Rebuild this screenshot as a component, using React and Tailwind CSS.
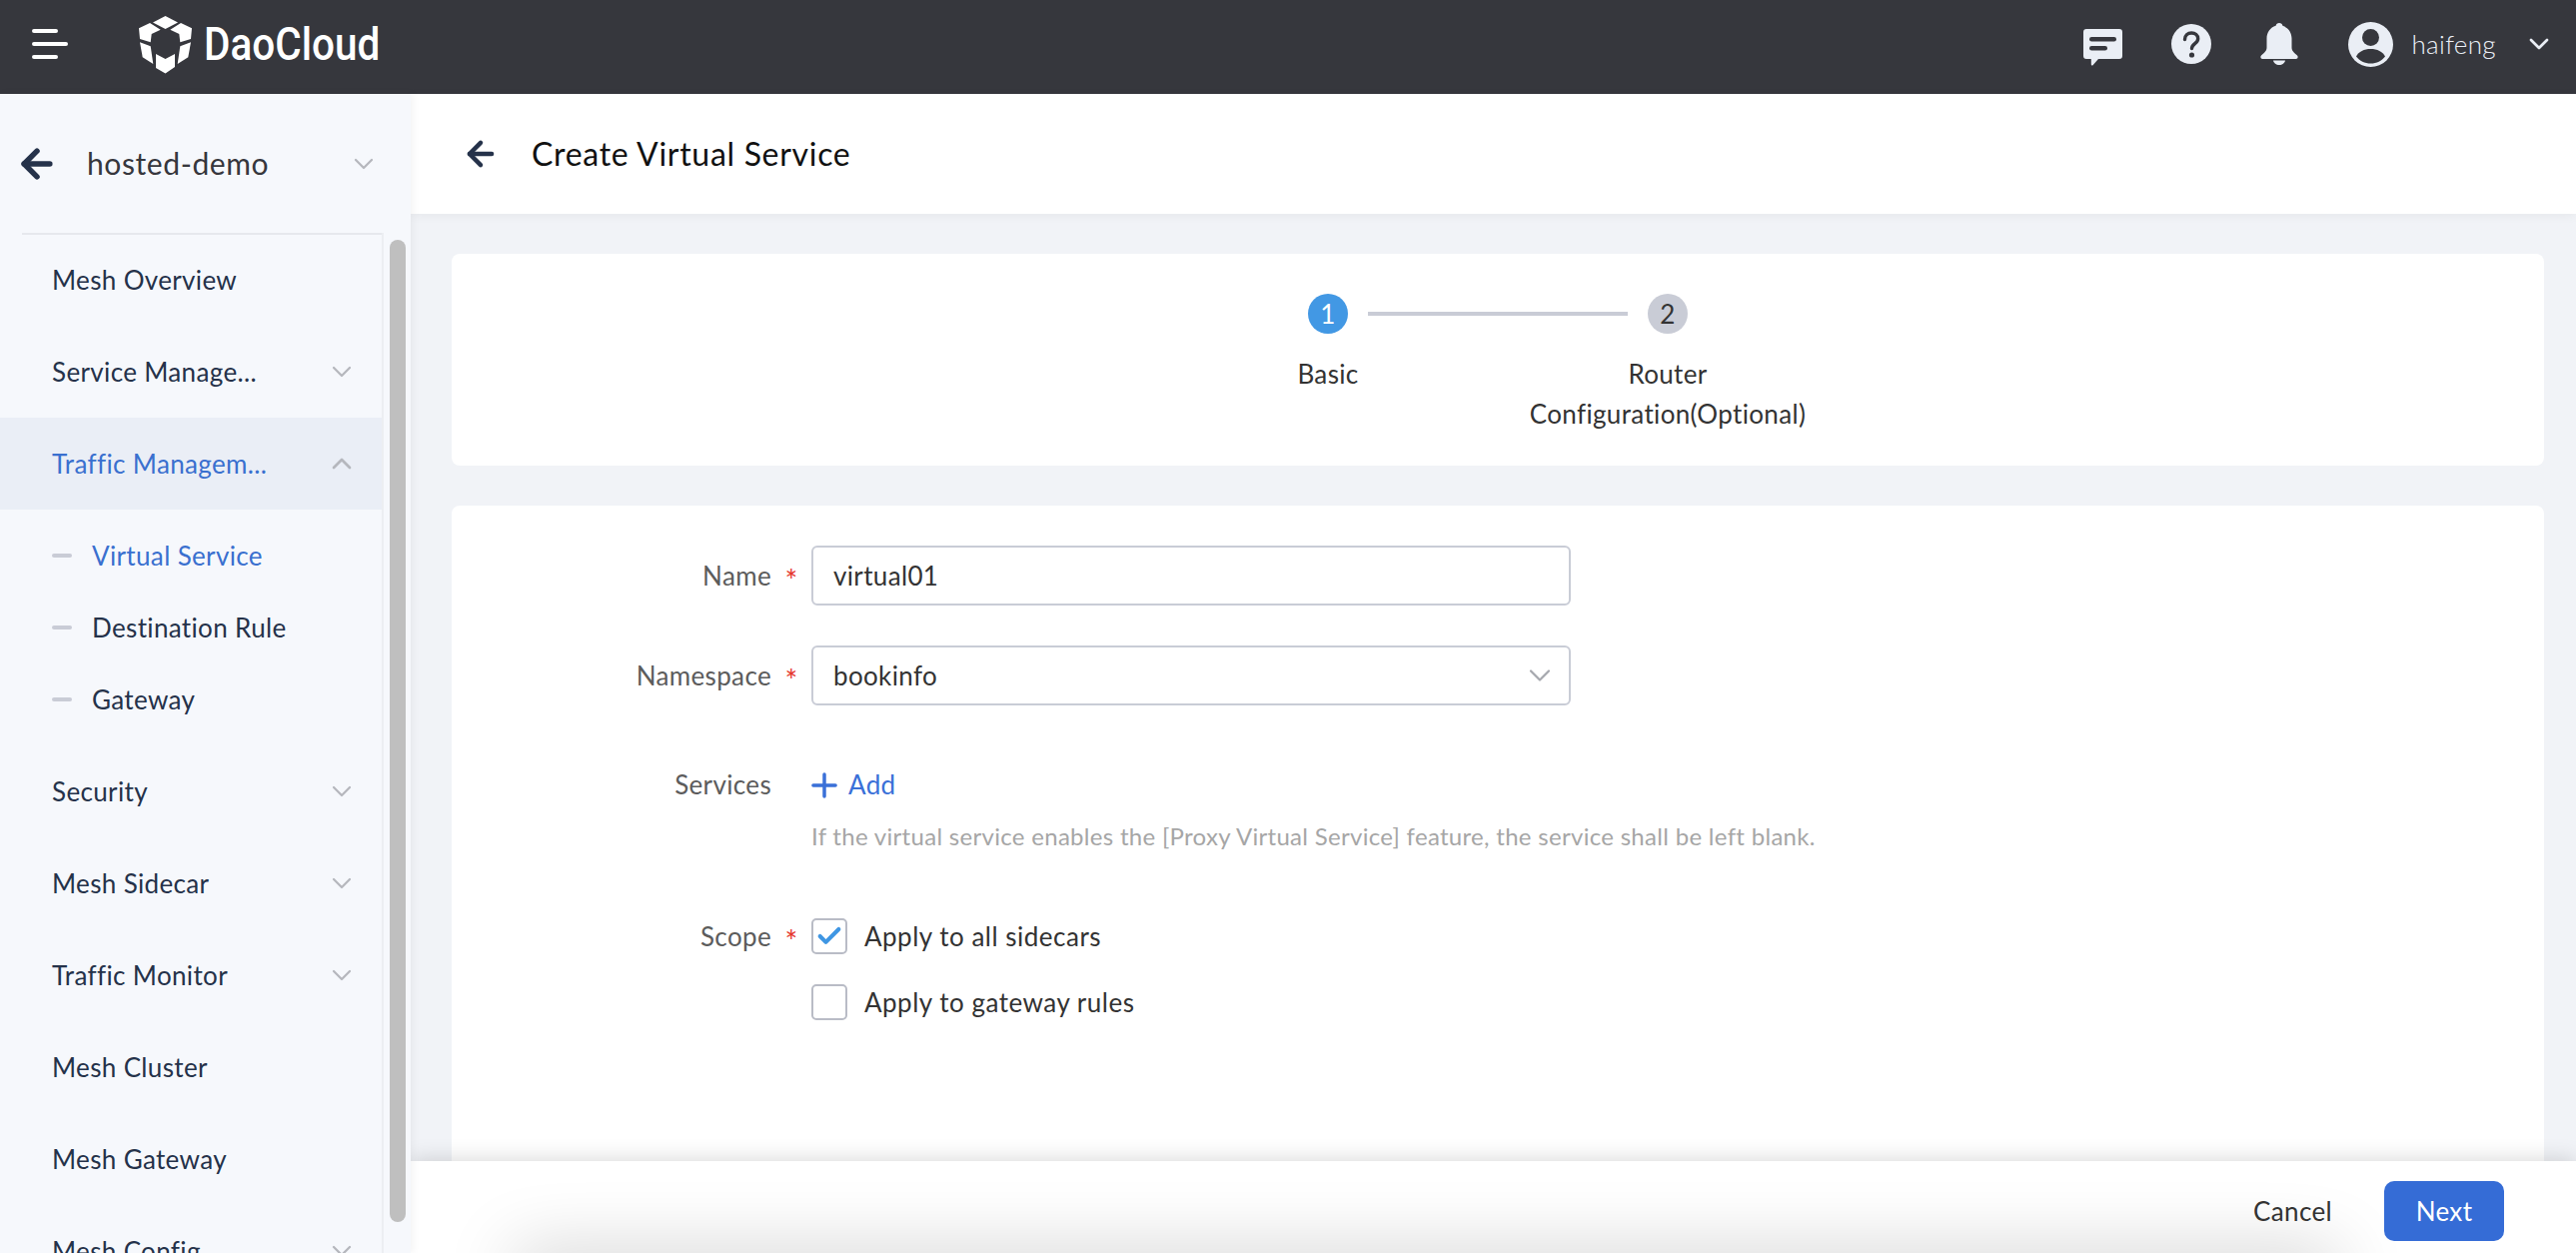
import React from 'react';
import { ChevronDown, ChevronUp, ArrowLeft, Plus, Check } from 'lucide-react';

const FONT = "font-['Lato','Open_Sans',sans-serif]";

function Logo() {
  return (
    <svg width="54" height="59" viewBox="0 0 54 59" fill="#fff">
      <path d="M26.500 1 L39 7.500 L26.500 14 L14 7.500 Z" />
      <path d="M0 13.300 L11 8 L21.700 14.700 L12.700 19 L11.700 27.300 L1 24 Z" />
      <path d="M53 13.300 L42 8 L31.300 14.700 L40.300 19 L41.300 27.300 L52 24 Z" />
      <path d="M1 27.300 L11.700 31.300 L14.300 49 L3.700 42.300 Z" />
      <path d="M52 27.300 L41.300 31.300 L38.700 49 L49.300 42.300 Z" />
      <path d="M17 39 L26.500 44 L36 39 L36 52 L26.500 58.500 L17 53 Z" />
    </svg>
  );
}

function ChatIcon() {
  return (
    <svg width="39" height="37" viewBox="0 0 39 37">
      <path d="M3 0h33a3 3 0 0 1 3 3v24a3 3 0 0 1-3 3H15l-5.500 6.300a1 1 0 0 1-1.700-.7V30H3a3 3 0 0 1-3-3V3a3 3 0 0 1 3-3z" fill="#eaeef5" />
      <rect x="6" y="8" width="27" height="4.500" rx="2.250" fill="#36373d" />
      <rect x="6" y="17" width="18" height="4.500" rx="2.250" fill="#36373d" />
    </svg>
  );
}

function HelpIcon() {
  return (
    <svg width="40" height="40" viewBox="0 0 40 40">
      <circle cx="20" cy="20" r="20" fill="#eaeef5" />
      <path d="M13.500 15.500c0-4 3-6.500 6.700-6.500s6.500 2.400 6.500 5.700c0 4.800-6.200 5-6.200 9.800" fill="none" stroke="#36373d" strokeWidth="3.400" strokeLinecap="round" />
      <circle cx="20.500" cy="31" r="2.600" fill="#36373d" />
    </svg>
  );
}

function BellIcon() {
  return (
    <svg width="38" height="42" viewBox="0 0 38 42" fill="#eaeef5">
      <path d="M19 0a3.500 3.500 0 0 1 3.400 2.800C28 4.400 31.500 9.500 31.500 15.500v9c0 3 1.500 4.500 5.500 8 1.300 1.200.5 3.500-1.300 3.500H2.300C.5 36-.3 33.700 1 32.500c4-3.500 5.500-5 5.500-8v-9c0-6 3.500-11.100 9.100-12.700A3.500 3.500 0 0 1 19 0z" />
      <path d="M13 37.500h12c-.4 2.600-3 4.500-6 4.500s-5.600-1.900-6-4.500z" />
    </svg>
  );
}

function AvatarIcon() {
  return (
    <svg width="45" height="45" viewBox="0 0 45 45">
      <circle cx="22.500" cy="22.500" r="22.500" fill="#eaeef5" />
      <circle cx="22.500" cy="15.500" r="8.500" fill="#36373d" />
      <path d="M8 34.500c2.500-5 8-7.500 14.500-7.500S34.500 29.500 37 34.500C33.500 39 28.500 41.500 22.500 41.500S11.500 39 8 34.500z" fill="#36373d" />
    </svg>
  );
}

function Header() {
  return (
    <header className="h-[94px] shrink-0 bg-[#36373d] flex items-center pl-8 pr-[21px] pb-[6px]">
      <div className="w-9 flex flex-col gap-[9px]">
        <div className="h-1 w-[26px] rounded-full bg-white" />
        <div className="h-1 w-9 rounded-full bg-white" />
        <div className="h-1 w-[26px] rounded-full bg-white" />
      </div>
      <div className="ml-[71px] flex items-center">
        <Logo />
      </div>
      <span className="ml-[11px] w-[173px] text-[46px] leading-none font-medium tracking-normal text-white font-['Roboto',sans-serif] origin-left scale-x-[0.88] whitespace-nowrap">DaoCloud</span>
      <div className="ml-auto flex items-center">
        <div className="mt-[6px]"><ChatIcon /></div>
        <div className="ml-[49px]"><HelpIcon /></div>
        <div className="ml-[49px]"><BellIcon /></div>
        <div className="ml-[50px]"><AvatarIcon /></div>
        <span className="ml-[18px] text-[26px] text-[#eaeef5] font-light">haifeng</span>
        <ChevronDown className="ml-[27px] text-[#eaeef5]" size={32} strokeWidth={2} />
      </div>
    </header>
  );
}

function NavRow({ label, open, active }) {
  return (
    <div className={`h-[92px] flex items-center pl-[52px] pr-[24px] ${active ? 'bg-[#eaeef6] text-[#3a70cf]' : 'text-[#25324a]'}`}>
      <span className="flex-1 text-[26px] whitespace-nowrap">{label}</span>
      {open === undefined ? null : open ? (
        <ChevronUp className="text-[#b5b7bd]" size={32} strokeWidth={2} />
      ) : (
        <ChevronDown className="text-[#b5b7bd]" size={32} strokeWidth={1.700} />
      )}
    </div>
  );
}

function SubRow({ label, active }) {
  return (
    <div className="h-[72px] flex items-center pl-[52px]">
      <div className="w-5 h-1 rounded-full bg-[#c9ccd6]" />
      <span className={`ml-5 text-[26px] ${active ? 'text-[#3a70cf]' : 'text-[#25324a]'}`}>{label}</span>
    </div>
  );
}

function Sidebar() {
  return (
    <aside className="w-[411px] shrink-0 bg-[#f6f8fc] flex flex-col overflow-hidden shadow-[2px_0_8px_rgba(0,0,0,0.05)] z-10">
      <div className="h-[139px] shrink-0 flex items-center pl-[15px] pr-[31px]">
        <ArrowLeft className="text-[#25324a]" size={44} strokeWidth={3} />
        <span className="ml-7 flex-1 text-[30px] text-[#36373d] tracking-[0.6px]">hosted-demo</span>
        <ChevronDown className="text-[#b5b7bd]" size={32} strokeWidth={1.700} />
      </div>
      <div className="flex flex-1 min-h-0">
        <div className="w-[384px] shrink-0 border-r-2 border-[#eceef2]">
          <div className="ml-[22px] h-0.5 bg-[#e6e8ed]" />
          <div className="-mt-px">
            <NavRow label="Mesh Overview" />
            <NavRow label="Service Manage..." open={false} />
            <NavRow label="Traffic Managem..." open active />
            <div className="py-[10px]">
              <SubRow label="Virtual Service" active />
              <SubRow label="Destination Rule" />
              <SubRow label="Gateway" />
            </div>
            <NavRow label="Security" open={false} />
            <NavRow label="Mesh Sidecar" open={false} />
            <NavRow label="Traffic Monitor" open={false} />
            <NavRow label="Mesh Cluster" />
            <NavRow label="Mesh Gateway" />
            <NavRow label="Mesh Config" open={false} />
          </div>
        </div>
        <div className="ml-[6px] mt-[7px] w-4 h-[983px] shrink-0 rounded-full bg-[#bfbfbf]" />
      </div>
    </aside>
  );
}

function Field({ label, required, center, children }) {
  return (
    <div className={`flex ${center ? 'items-center' : 'items-start'}`}>
      <div className="w-[360px] shrink-0 flex items-center justify-end h-[36px] text-[26px] text-[#5c5c5c]">
        <span>{label}</span>
        <span className="w-10 text-center text-[30px] leading-none text-[#e5342c] translate-y-1">{required ? '*' : ''}</span>
      </div>
      {children}
    </div>
  );
}

function CheckOption({ label, checked }) {
  return (
    <div className="flex items-center h-9">
      <div className="w-9 h-9 rounded-[5px] border-2 border-[#b9bcc6] flex items-center justify-center bg-white">
        {checked ? <Check className="text-[#3f96e3]" size={28} strokeWidth={3.500} /> : null}
      </div>
      <span className="ml-[17px] text-[26px] text-[#333333] tracking-[0.5px]">{label}</span>
    </div>
  );
}

function Form() {
  return (
    <div className="h-[700px] bg-white rounded-t-lg mt-10 pt-10">
      <Field label="Name" required center>
        <div className="w-[760px] h-[60px] border-2 border-[#c9ccd6] rounded-md flex items-center px-5 text-[26px] text-[#333333]">virtual01</div>
      </Field>
      <div className="mt-10">
        <Field label="Namespace" required center>
          <div className="w-[760px] h-[60px] border-2 border-[#c9ccd6] rounded-md flex items-center justify-between pl-5 pr-[11px] text-[26px] text-[#333333]">
            bookinfo
            <ChevronDown className="text-[#a6a8ae]" size={36} strokeWidth={1.500} />
          </div>
        </Field>
      </div>
      <div className="mt-[60px]">
        <Field label="Services" center>
          <div className="flex items-center text-[26px] text-[#3a70d8]">
            <Plus className="-ml-[6px]" size={38} strokeWidth={2.200} />
            <span className="ml-[5px]">Add</span>
          </div>
        </Field>
      </div>
      <p className="ml-[360px] mt-[18px] h-7 leading-7 text-[24px] text-[#a6a6a6] tracking-[0.3px]">If the virtual service enables the [Proxy Virtual Service] feature, the service shall be left blank.</p>
      <div className="mt-[68px]">
        <Field label="Scope" required>
          <div className="flex flex-col gap-[30px]">
            <CheckOption label="Apply to all sidecars" checked />
            <CheckOption label="Apply to gateway rules" />
          </div>
        </Field>
      </div>
    </div>
  );
}

export default function App() {
  return (
    <div className={`h-screen flex flex-col overflow-hidden bg-[#f1f3f7] tracking-[0.35px] ${FONT}`}>
      <Header />
      <div className="flex flex-1 min-h-0">
        <Sidebar />
        <main className="flex-1 min-w-0 flex flex-col">
          <div className="h-[120px] shrink-0 bg-white flex items-center pl-[51px] shadow-[0_2px_10px_rgba(0,0,0,0.05)]">
            <ArrowLeft className="text-[#25324a]" size={38} strokeWidth={2.800} />
            <h1 className="ml-[32px] text-[32px] text-[#111111] tracking-[0.7px]">Create Virtual Service</h1>
          </div>
          <div className="flex-1 min-h-0 overflow-hidden pt-10 pl-[41px] pr-8">
            <div className="h-[212px] bg-white rounded-lg flex justify-center pt-10">
              <div className="flex flex-col items-center w-[340px] text-[26px] text-[#333333]">
                <div className="w-10 h-10 rounded-full bg-[#4298e4] text-white flex items-center justify-center">1</div>
                <span className="mt-5 leading-10">Basic</span>
              </div>
              <div className="w-[260px] h-1 mt-[18px] bg-[#c9ccd6] -mx-[130px]" />
              <div className="flex flex-col items-center w-[340px] text-[26px] text-[#333333]">
                <div className="w-10 h-10 rounded-full bg-[#c9ccd6] flex items-center justify-center">2</div>
                <span className="mt-5 leading-10 text-center">Router<br />Configuration(Optional)</span>
              </div>
            </div>
            <Form />
          </div>
          <footer className="relative h-[92px] shrink-0 bg-white flex items-center justify-end pr-[72px] pt-2 shadow-[0_-2px_20px_rgba(0,0,0,0.15)]">
            <div className="absolute inset-0 overflow-hidden">
              <div className="absolute left-[104px] right-[238px] top-[92px] h-10 bg-black/20 shadow-[0_0_70px_rgba(0,0,0,0.22)]" />
            </div>
            <span className="relative text-[26px] text-[#333333]">Cancel</span>
            <button className="relative ml-[52px] w-[120px] h-[60px] rounded-[10px] bg-[#356cd6] text-white text-[26px]">Next</button>
          </footer>
        </main>
      </div>
    </div>
  );
}
